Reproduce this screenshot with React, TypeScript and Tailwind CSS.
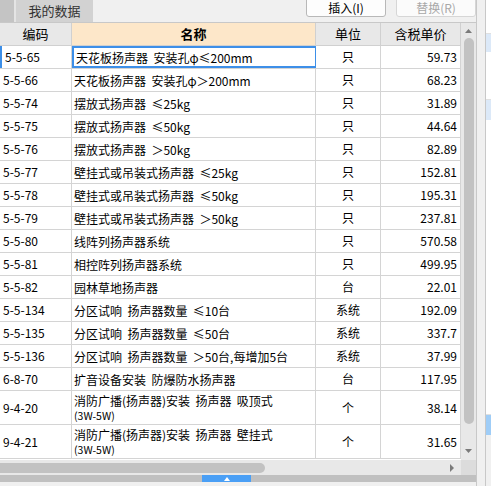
import React from "react";

type Row = {
  code: string;
  name: string;
  sub?: string;
  unit: string;
  price: string;
};

const rows: Row[] = [
  { code: "5-5-65", name: "天花板扬声器  安装孔φ≤200mm", unit: "只", price: "59.73" },
  { code: "5-5-66", name: "天花板扬声器  安装孔φ＞200mm", unit: "只", price: "68.23" },
  { code: "5-5-74", name: "摆放式扬声器  ≤25kg", unit: "只", price: "31.89" },
  { code: "5-5-75", name: "摆放式扬声器  ≤50kg", unit: "只", price: "44.64" },
  { code: "5-5-76", name: "摆放式扬声器  ＞50kg", unit: "只", price: "82.89" },
  { code: "5-5-77", name: "壁挂式或吊装式扬声器  ≤25kg", unit: "只", price: "152.81" },
  { code: "5-5-78", name: "壁挂式或吊装式扬声器  ≤50kg", unit: "只", price: "195.31" },
  { code: "5-5-79", name: "壁挂式或吊装式扬声器  ＞50kg", unit: "只", price: "237.81" },
  { code: "5-5-80", name: "线阵列扬声器系统", unit: "只", price: "570.58" },
  { code: "5-5-81", name: "相控阵列扬声器系统", unit: "只", price: "499.95" },
  { code: "5-5-82", name: "园林草地扬声器", unit: "台", price: "22.01" },
  { code: "5-5-134", name: "分区试响  扬声器数量  ≤10台", unit: "系统", price: "192.09" },
  { code: "5-5-135", name: "分区试响  扬声器数量  ≤50台", unit: "系统", price: "337.7" },
  { code: "5-5-136", name: "分区试响  扬声器数量  ＞50台,每增加5台", unit: "系统", price: "37.99" },
  { code: "6-8-70", name: "扩音设备安装  防爆防水扬声器", unit: "台", price: "117.95" },
  { code: "9-4-20", name: "消防广播(扬声器)安装  扬声器  吸顶式", sub: "(3W-5W)", unit: "个", price: "38.14" },
  { code: "9-4-21", name: "消防广播(扬声器)安装  扬声器  壁挂式", sub: "(3W-5W)", unit: "个", price: "31.65" },
];

const font = { fontFamily: '"Noto Sans CJK SC", "Noto Sans", sans-serif' };

export default function App() {
  return (
    <div className="w-[491px] h-[486px] overflow-hidden flex bg-[#f0f0f0] text-black text-[12px]" style={font}>
      {/* MAIN PANEL */}
      <div className="w-[476px] h-full flex flex-col">
        {/* TOP BAR */}
        <div className="h-[23px] flex items-start border-b border-[#c8c8c8] bg-[#f0f0f0] overflow-hidden">
          <div className="w-[14px] h-full bg-[#c4c4c4]" />
          <div className="w-[2px] h-full bg-[#e4e4e4]" />
          <div className="w-[77px] h-full bg-[#d2d2d2] flex items-center justify-center text-[#333] text-[13px]">
            我的数据
          </div>
          <div className="flex-1" />
          <div className="w-[80px] h-[18px] -mt-[1px] bg-[#fdfdfd] border border-[#b8b8b8] rounded-b-[3px] flex items-center justify-center text-[12px] leading-none">
            插入(I)
          </div>
          <div className="w-[10px]" />
          <div className="w-[80px] h-[18px] -mt-[1px] bg-[#fbfbfb] border border-[#d6d6d6] rounded-b-[3px] flex items-center justify-center text-[12px] leading-none text-[#a8a8a8]">
            替换(R)
          </div>
        </div>

        {/* TABLE + V SCROLL */}
        <div className="flex h-[437px]">
          <div className="w-[461px] bg-white flex flex-col overflow-hidden">
            {/* HEADER */}
            <div className="h-[23px] flex border-b border-[#d0d0d0] shrink-0 text-[13px]">
              <div className="w-[72px] border-r border-[#d0d0d0] bg-[#e8e8e8] flex items-center justify-center">编码</div>
              <div className="w-[244px] border-r border-[#d0d0d0] bg-[#fde7c9] flex items-center justify-center font-bold">名称</div>
              <div className="w-[65px] border-r border-[#d0d0d0] bg-[#e8e8e8] flex items-center justify-center">单位</div>
              <div className="w-[80px] border-r border-[#d0d0d0] bg-[#e8e8e8] flex items-center justify-center">含税单价</div>
            </div>

            {/* ROWS */}
            {rows.map((r, i) => (
              <div
                key={r.code}
                className={`flex border-b border-[#d4d4d4] shrink-0 ${r.sub ? "h-[34px]" : "h-[23px]"}`}
              >
                <div
                  className={`w-[72px] border-r border-[#d4d4d4] flex items-center pl-[3px] ${
                    i === 0 ? "border-l-2 border-l-[#3d8fe8] pl-[1px]" : ""
                  }`}
                >
                  {r.code}
                </div>
                <div
                  className={`w-[244px] border-r flex flex-col justify-center pl-[2px] whitespace-pre overflow-hidden ${
                    i === 0 ? "border-2 border-[#3d8fe8] pl-[0px]" : "border-[#d4d4d4]"
                  }`}
                >
                  <span className={r.sub ? "leading-[17px]" : "leading-[15px]"}>{r.name}</span>
                  {r.sub && <span className="leading-[14px] text-[10.5px]">{r.sub}</span>}
                </div>
                <div className="w-[65px] border-r border-[#d4d4d4] flex items-center justify-center">{r.unit}</div>
                <div className="w-[80px] border-r border-[#d4d4d4] flex items-center justify-end pr-[3px]">{r.price}</div>
              </div>
            ))}
          </div>

          {/* VERTICAL SCROLLBAR */}
          <div className="w-[15px] bg-[#e8e8e8] flex flex-col items-center">
            <svg width="9" height="14" viewBox="0 0 9 14" className="mt-[1px] shrink-0">
              <path d="M1 9 L4.5 5 L8 9 Z" fill="#7a7a7a" />
            </svg>
            <div className="w-[10px] h-[386px] rounded-full bg-[#c2c2c2]" />
            <div className="flex-1" />
            <svg width="9" height="14" viewBox="0 0 9 14" className="mb-[2px] shrink-0">
              <path d="M1 5 L4.5 9 L8 5 Z" fill="#7a7a7a" />
            </svg>
          </div>
        </div>

        {/* HORIZONTAL SCROLLBAR */}
        <div className="h-[15px] flex">
          <div className="w-[461px] bg-[#e8e8e8] flex items-center">
            <div className="w-[265px] h-[10px] rounded-r-full bg-[#c2c2c2]" />
            <div className="flex-1" />
            <svg width="10" height="10" viewBox="0 0 10 10" className="mr-[4px]">
              <path d="M3 1 L7 5 L3 9 Z" fill="#7a7a7a" />
            </svg>
          </div>
          <div className="w-[15px] bg-[#dcdcdc]" />
        </div>

        {/* BOTTOM SPLITTER */}
        <div className="h-[7px] bg-[#c0c0c0] flex">
          <div className="w-[202px]" />
          <div className="w-[49px] bg-[#4a9ff5] flex items-center justify-center">
            <svg width="6" height="4" viewBox="0 0 6 4">
              <path d="M0 4 L3 0 L6 4 Z" fill="#ffffff" />
            </svg>
          </div>
        </div>
        <div className="flex-1 bg-[#f0f0f0]" />
      </div>

      {/* RIGHT STRIP */}
      <div className="flex-1 h-full flex border-l border-[#c8c8c8]">
        <div className="w-[8px] h-full bg-[#f0f0f0]" />
        <div className="flex-1 h-full border-l border-[#c8c8c8] bg-white flex flex-col">
          <div className="h-[34px] border-b border-[#e0e0e0]" />
          <div className="h-[18px] bg-[#dce9f8]" />
          <div className="h-[48px] border-b border-[#e0e0e0]" />
          <div className="h-[20px] bg-[#dce9f8]" />
          <div className="h-[295px] border-b border-[#e0e0e0]" />
          <div className="h-[20px] bg-[#9fcdf7]" />
          <div className="flex-1 bg-[#f0f0f0]" />
        </div>
      </div>
    </div>
  );
}
